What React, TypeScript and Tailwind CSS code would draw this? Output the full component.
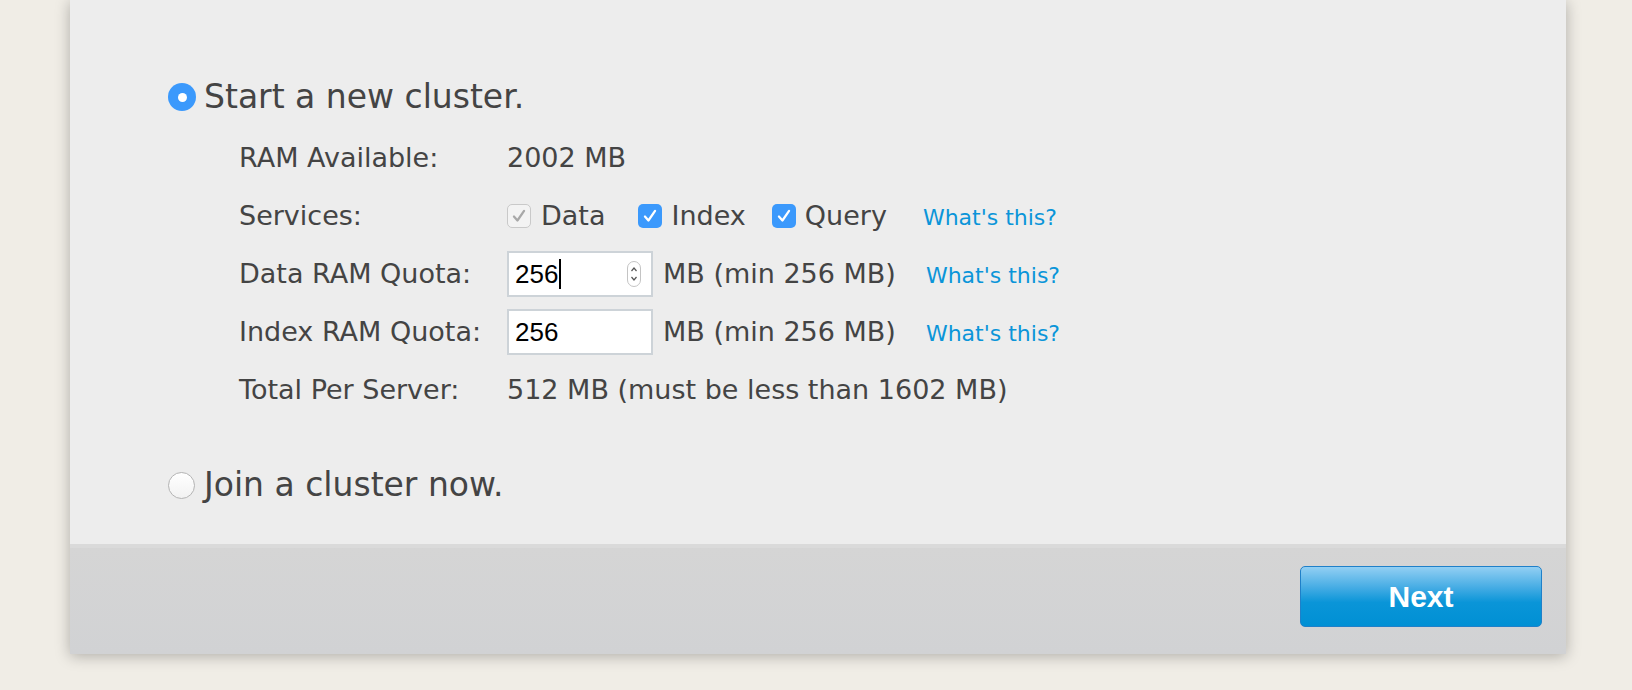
import React from "react";

const textFont = { fontFamily: '"DejaVu Sans", Verdana, sans-serif' };
const inputFont = { fontFamily: '"Liberation Sans", Arial, sans-serif' };

function Check({ disabled }: { disabled?: boolean }) {
  return (
    <span
      className={
        disabled
          ? "flex h-[24px] w-[24px] items-center justify-center rounded-[5px] border border-[#c9c9c9] bg-[#f3f3f3]"
          : "flex h-[24px] w-[24px] items-center justify-center rounded-[5px] bg-[#3b99fc]"
      }
    >
      <svg width="18" height="18" viewBox="0 0 16 16" fill="none">
        <path
          d="M3.5 8.5 L6.6 12 L12.5 3.5"
          stroke={disabled ? "#a8a8a8" : "#ffffff"}
          strokeWidth="2"
          strokeLinecap="round"
          strokeLinejoin="round"
        />
      </svg>
    </span>
  );
}

function Radio({ on }: { on?: boolean }) {
  if (on) {
    return (
      <span className="flex h-[28px] w-[28px] shrink-0 items-center justify-center rounded-full bg-[#3b99fc]">
        <span className="h-[9px] w-[9px] rounded-full bg-white" />
      </span>
    );
  }
  return (
    <span className="h-[27px] w-[27px] shrink-0 rounded-full border border-[#b4b4b4] bg-gradient-to-b from-white to-[#f2f2f2]" />
  );
}

function QuotaInput({ focused }: { focused?: boolean }) {
  return (
    <div className="flex h-[46px] w-[146px] items-center border-2 border-[#cdd3d8] bg-white pl-[6px] pr-[10px]">
      <span className="text-[26px] leading-none text-black" style={inputFont}>
        256
      </span>
      {focused && <span className="ml-[1px] h-[30px] w-[2px] bg-black" />}
      {focused && (
        <span className="ml-auto flex h-[26px] w-[14px] flex-col items-center justify-center rounded-full border border-[#c4c4c4] bg-white">
          <svg width="8" height="18" viewBox="0 0 8 18" fill="none">
            <path d="M1.5 6 L4 3 L6.5 6" stroke="#555" strokeWidth="1.2" />
            <path d="M1.5 12 L4 15 L6.5 12" stroke="#555" strokeWidth="1.2" />
          </svg>
        </span>
      )}
    </div>
  );
}

function Link() {
  return <span className="text-[22px] text-[#0b95d9]">What's this?</span>;
}

export default function App() {
  return (
    <div className="h-[690px] w-full bg-[#f0ede6] pl-[70px] pr-[66px]" style={textFont}>
      <div className="flex flex-col shadow-[0_2px_14px_rgba(0,0,0,0.28)]">
        <div className="h-[544px] bg-[#ededed] pl-[98px] pt-[69px] text-[#444444]">
          <div className="flex items-center gap-[8px]">
            <Radio on />
            <span className="text-[33px] leading-[56px]">Start a new cluster.</span>
          </div>

          <div className="mt-[4px] grid grid-cols-[268px_1fr] pl-[71px] text-[27px]">
            <div className="flex h-[58px] items-center">RAM Available:</div>
            <div className="flex h-[58px] items-center">2002 MB</div>

            <div className="flex h-[58px] items-center">Services:</div>
            <div className="flex h-[58px] items-center">
              <Check disabled />
              <span className="ml-[10px]">Data</span>
              <span className="ml-[33px]">
                <Check />
              </span>
              <span className="ml-[9px]">Index</span>
              <span className="ml-[26px]">
                <Check />
              </span>
              <span className="ml-[9px]">Query</span>
              <span className="ml-[36px]">
                <Link />
              </span>
            </div>

            <div className="flex h-[58px] items-center">Data RAM Quota:</div>
            <div className="flex h-[58px] items-center">
              <QuotaInput focused />
              <span className="ml-[10px]">MB (min 256 MB)</span>
              <span className="ml-[30px]">
                <Link />
              </span>
            </div>

            <div className="flex h-[58px] items-center">Index RAM Quota:</div>
            <div className="flex h-[58px] items-center">
              <QuotaInput />
              <span className="ml-[10px]">MB (min 256 MB)</span>
              <span className="ml-[30px]">
                <Link />
              </span>
            </div>

            <div className="flex h-[58px] items-center">Total Per Server:</div>
            <div className="flex h-[58px] items-center">512 MB (must be less than 1602 MB)</div>
          </div>

          <div className="mt-[38px] flex items-center gap-[9px]">
            <Radio />
            <span className="text-[33px] leading-[56px]">Join a cluster now.</span>
          </div>
        </div>

        <div className="flex h-[110px] justify-end border-t-4 border-[#dadada] bg-gradient-to-b from-[#d5d5d5] to-[#d1d2d4] pr-[24px] pt-[18px]">
          <button
            className="h-[61px] w-[242px] rounded-[5px] border border-[#1f80c9] bg-[linear-gradient(to_bottom,#92cff3_0%,#45ace4_35%,#0a95d8_60%,#0090d4_100%)] text-[30px] font-bold text-white"
            style={inputFont}
          >
            Next
          </button>
        </div>
      </div>
    </div>
  );
}
